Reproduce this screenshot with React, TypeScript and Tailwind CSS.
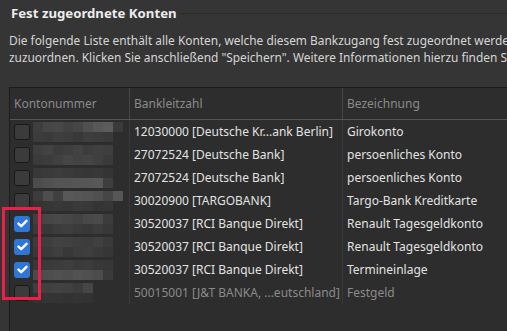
import React from "react";

interface Konto {
  blz: string;
  bez: string;
  checked: boolean;
  disabled?: boolean;
  blur: number[][];
}

// verpixelte Kontonummern (Grauwerte der Mosaik-Kacheln)
const konten: Konto[] = [
  { blz: "12030000 [Deutsche Kr...ank Berlin]", bez: "Girokonto", checked: false, blur: [[62, 70, 72, 66, 70, 80, 88, 92, 58], [60, 58, 62, 60, 56, 62, 60, 58]] },
  { blz: "27072524 [Deutsche Bank]", bez: "persoenliches Konto", checked: false, blur: [[62, 66, 60, 62, 66, 60, 64, 62], [58, 60, 64, 70, 66, 68, 64, 58]] },
  { blz: "27072524 [Deutsche Bank]", bez: "persoenliches Konto", checked: false, blur: [[56, 58, 60, 58, 56, 54, 56, 52], [76, 80, 84, 84, 86, 86, 88, 62]] },
  { blz: "30020900 [TARGOBANK]", bez: "Targo-Bank Kreditkarte", checked: false, blur: [[60, 78, 64, 88, 86, 84, 80, 70, 86], [52, 54, 56, 54, 58, 56, 52, 54]] },
  { blz: "30520037 [RCI Banque Direkt]", bez: "Renault Tagesgeldkonto", checked: true, blur: [[64, 70, 72, 70, 66, 72, 74, 60], [58, 56, 60, 62, 58, 56, 60, 56]] },
  { blz: "30520037 [RCI Banque Direkt]", bez: "Renault Tagesgeldkonto", checked: true, blur: [[60, 62, 66, 64, 62, 60, 64, 58], [56, 58, 62, 56, 60, 62, 58, 54]] },
  { blz: "30520037 [RCI Banque Direkt]", bez: "Termineinlage", checked: true, blur: [[56, 58, 60, 62, 58, 60, 56, 54], [74, 78, 80, 78, 82, 80, 76, 58]] },
  { blz: "50015001 [J&T BANKA, ...eutschland]", bez: "Festgeld", checked: false, disabled: true, blur: [[62, 64, 66, 64, 60, 70], [50, 52, 52, 50, 52, 50]] },
];

function Mosaic({ rows }: { rows: number[][] }) {
  return (
    <div className="flex flex-col">
      {rows.map((r, i) => (
        <div key={i} className="flex">
          {r.map((g, j) => (
            <div key={j} className="w-[10px] h-[10px]" style={{ backgroundColor: `rgb(${g},${g},${g})` }} />
          ))}
        </div>
      ))}
    </div>
  );
}

function Checkbox({ checked }: { checked: boolean }) {
  if (checked) {
    return (
      <div className="w-4 h-4 rounded-[3px] bg-[#2f76d6] flex items-center justify-center shrink-0">
        <svg width="11" height="9" viewBox="0 0 11 9">
          <path d="M1.5 4.6 L4.2 7.2 L9.5 1.8" fill="none" stroke="#fff" strokeWidth="2.4" strokeLinecap="round" strokeLinejoin="round" />
        </svg>
      </div>
    );
  }
  return <div className="w-4 h-4 rounded-[3px] border border-[#191919] bg-[#3b3b3b] shrink-0" />;
}

export default function App() {
  return (
    <div className="w-[507px] h-[331px] overflow-hidden bg-[#353535] text-[#dedede] font-['Noto_Sans',sans-serif] relative">
      <div className="flex items-center pl-[11px] pt-[3px] gap-[3px]">
        <h2 className="text-[13.2px] font-bold text-[#ececec] leading-[20px] whitespace-nowrap">Fest zugeordnete Konten</h2>
        <div className="flex-1 h-px bg-[#2b2b2b] mt-px" />
      </div>

      <p className="pl-[9px] pt-[9px] text-[11.9px] leading-[17px] whitespace-nowrap text-[#d6d6d6]">
        Die folgende Liste enthält alle Konten, welche diesem Bankzugang fest zugeordnet werden. Bitte wählen Sie die Konten aus, die Sie
        <br />
        zuzuordnen. Klicken Sie anschließend "Speichern". Weitere Informationen hierzu finden Sie in der Hilfe.
      </p>

      <div className="ml-[9px] mt-[21px] border-l border-t border-[#1d1d1d] bg-[#2d2d2d] h-[260px] text-[12px]">
        <div className="flex h-[32px] border-b border-[#555] text-[#8a8a8a]">
          <div className="w-[120px] border-r border-[#454545] pl-[4px] flex items-center">Kontonummer</div>
          <div className="w-[213px] border-r border-[#454545] pl-[4px] flex items-center">Bankleitzahl</div>
          <div className="flex-1 pl-[4px] flex items-center">Bezeichnung</div>
        </div>
        {konten.map((k, i) => (
          <div key={i} className={`flex h-[23px] ${k.disabled ? "text-[#8a8a8a]" : "text-[#e2e2e2]"}`}>
            <div className="w-[120px] border-r border-[#3a3a3a] pl-[4px] flex items-center gap-[3px] overflow-hidden">
              <Checkbox checked={k.checked} />
              <Mosaic rows={k.blur} />
            </div>
            <div className="w-[213px] border-r border-[#3a3a3a] pl-[4px] flex items-center whitespace-nowrap">{k.blz}</div>
            <div className="flex-1 pl-[4px] flex items-center whitespace-nowrap">{k.bez}</div>
          </div>
        ))}
      </div>

      {/* Markierung um die ausgewählten Konten */}
      <div className="absolute left-[2px] top-[207px] w-[39px] h-[93px] border-[3px] border-[#ec1f4a]" />
    </div>
  );
}
